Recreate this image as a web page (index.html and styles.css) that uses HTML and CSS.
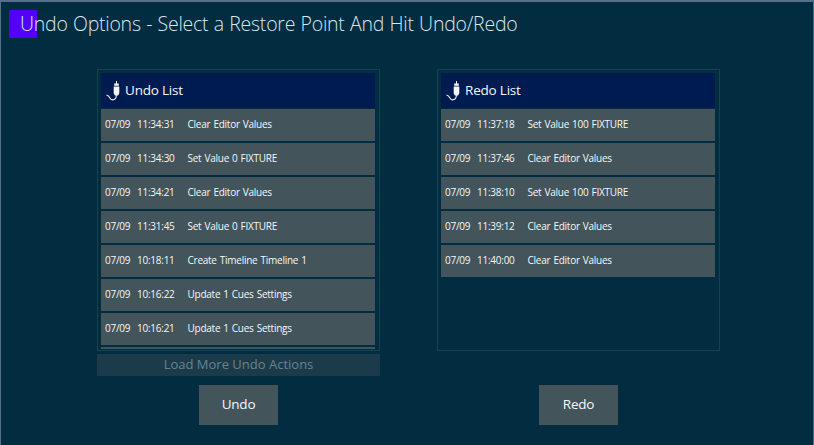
FILE: index.html
```html
<!DOCTYPE html>
<html lang="en">
<head>
<meta charset="utf-8">
<title>Undo Options</title>
<link rel="stylesheet" href="styles.css">
</head>
<body>
<svg class="defs" width="0" height="0" aria-hidden="true">
  <symbol id="plug" viewBox="0 0 14 20">
    <path d="M10 0h1v3h-1zM8.2 2.4h4.600v2.400H8.200zM7.700 5.400h5.600v6.800l-1.200 2.300H8.900L7.700 12.200z" fill="currentColor"/>
    <path d="M10.400 14c0 2.800-1.500 4.900-4 4.900-3.100 0-2.100-4.400-5.900-4.900" fill="none" stroke="currentColor" stroke-width="1.100"/>
  </symbol>
</svg>
<div class="window">
  <header class="title-bar"><h1 class="title">Undo Options - Select a Restore Point And Hit Undo/Redo</h1></header>
  <main class="columns">
    <section class="column">
      <div class="panel">
        <h2 class="panel-head"><svg class="icon"><use href="#plug"/></svg><span>Undo List</span></h2>
        <ul class="list">
          <li class="row"><span class="date">07/09</span><span class="time">11:34:31</span><span>Clear Editor Values</span></li>
          <li class="row"><span class="date">07/09</span><span class="time">11:34:30</span><span>Set Value 0 FIXTURE</span></li>
          <li class="row"><span class="date">07/09</span><span class="time">11:34:21</span><span>Clear Editor Values</span></li>
          <li class="row"><span class="date">07/09</span><span class="time">11:31:45</span><span>Set Value 0 FIXTURE</span></li>
          <li class="row"><span class="date">07/09</span><span class="time">10:18:11</span><span>Create Timeline Timeline 1</span></li>
          <li class="row"><span class="date">07/09</span><span class="time">10:16:22</span><span>Update 1 Cues Settings</span></li>
          <li class="row"><span class="date">07/09</span><span class="time">10:16:21</span><span>Update 1 Cues Settings</span></li>
          <li class="row"></li>
        </ul>
      </div>
      <button class="load-more" disabled>Load More Undo Actions</button>
      <button class="action">Undo</button>
    </section>
    <section class="column">
      <div class="panel">
        <h2 class="panel-head"><svg class="icon"><use href="#plug"/></svg><span>Redo List</span></h2>
        <ul class="list">
          <li class="row"><span class="date">07/09</span><span class="time">11:37:18</span><span>Set Value 100 FIXTURE</span></li>
          <li class="row"><span class="date">07/09</span><span class="time">11:37:46</span><span>Clear Editor Values</span></li>
          <li class="row"><span class="date">07/09</span><span class="time">11:38:10</span><span>Set Value 100 FIXTURE</span></li>
          <li class="row"><span class="date">07/09</span><span class="time">11:39:12</span><span>Clear Editor Values</span></li>
          <li class="row"><span class="date">07/09</span><span class="time">11:40:00</span><span>Clear Editor Values</span></li>
        </ul>
      </div>
      <button class="action">Redo</button>
    </section>
  </main>
</div>
</body>
</html>
```

FILE: styles.css
```css
* { box-sizing: border-box; }
body, h1, h2, ul { margin: 0; padding: 0; font-weight: 400; }
body { width: 814px; height: 445px; overflow: hidden; font-family: "Open Sans", "Noto Sans", sans-serif; color: #f4f8fa; }
.defs { display: block; }
.window {
  height: 445px;
  background: #022c40;
  border: solid #55708d;
  border-width: 2px 1px 0;
}
.title-bar {
  height: 67px;
  padding: 8px 0 0 8px;
}
.title {
  height: 28px;
  padding-left: 11px;
  background: linear-gradient(#5200fa, #5200fa) left / 28px 28px no-repeat;
  border-radius: 2px;
  font-size: 19.5px;
  font-weight: 300;
  line-height: 28px;
  letter-spacing: -0.25px;
  word-spacing: 0.6px;
  white-space: nowrap;
  color: #d9e7f1;
}
.columns { display: flex; gap: 57px; padding-left: 96px; }
.column { display: flex; flex-direction: column; width: 283px; height: 356px; }
.panel {
  flex: none;
  height: 282px;
  padding: 3px 4px 2px 3px;
  border: 1px solid #17414f;
}
.panel-head {
  display: flex;
  align-items: center;
  height: 35px;
  margin-bottom: 1px;
  padding-left: 5px;
  gap: 5px;
  background: #001b50;
  font-size: 13.5px;
  letter-spacing: -0.2px;
  line-height: 20px;
}
.panel-head span { padding-bottom: 2px; }
.icon { width: 14px; height: 20px; }
.list { height: 240px; overflow: hidden; list-style: none; }
.row {
  display: flex;
  height: 32px;
  margin-bottom: 2px;
  padding-left: 4px;
  background: #43555b;
  font-size: 10px;
  line-height: 31px;
  letter-spacing: -0.25px;
  word-spacing: 0.7px;
  white-space: nowrap;
}
.date { width: 32px; }
.time { width: 50.5px; }
button { padding: 0; border: 0; font-family: inherit; color: inherit; }
.load-more {
  flex: none;
  height: 22px;
  margin-top: 3px;
  padding-bottom: 2px;
  background: #1b3b4b;
  color: #69838e;
  font-size: 13px;
  line-height: 20px;
}
.action {
  width: 79px;
  height: 40px;
  margin: auto 0 0 102px;
  padding-bottom: 2px;
  background: #43555b;
  font-size: 13.5px;
  letter-spacing: -0.2px;
}
```
